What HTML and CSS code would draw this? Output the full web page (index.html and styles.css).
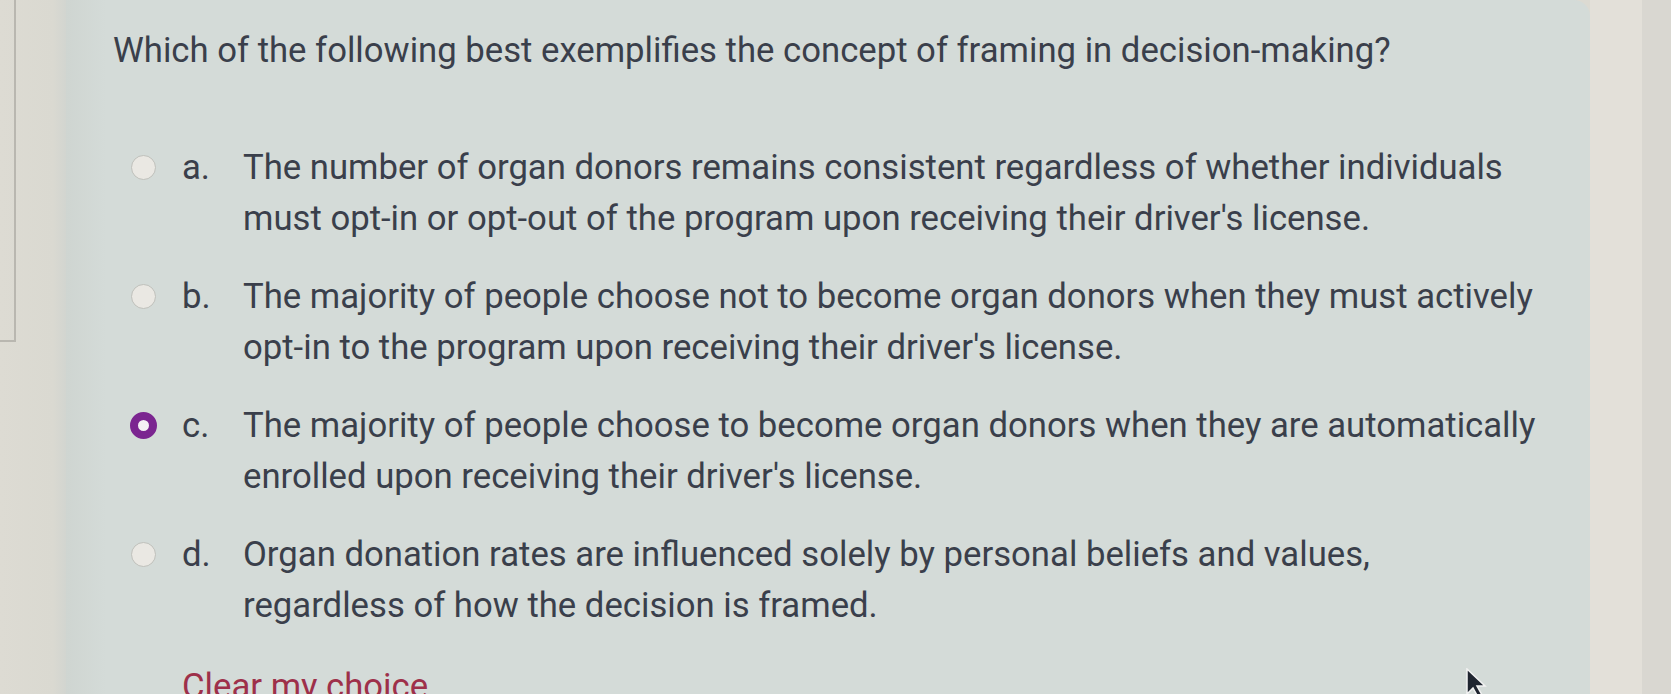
FILE: index.html
```html
<!DOCTYPE html>
<html lang="en">
<head>
<meta charset="utf-8">
<title>Question</title>
<link rel="stylesheet" href="styles.css">
</head>
<body>
<div class="page">
  <div class="left-strip"><div class="left-box"></div></div>
  <main class="panel">
    <h1 class="question">Which of the following best exemplifies the concept of framing in decision-making?</h1>
    <div class="answers">
      <div class="option">
        <span class="radio"></span>
        <span class="letter">a.</span>
        <span class="text">The number of organ donors remains consistent regardless of whether individuals must opt-in or opt-out of the program upon receiving their driver's license.</span>
      </div>
      <div class="option">
        <span class="radio"></span>
        <span class="letter">b.</span>
        <span class="text">The majority of people choose not to become organ donors when they must actively opt-in to the program upon receiving their driver's license.</span>
      </div>
      <div class="option">
        <span class="radio checked"></span>
        <span class="letter">c.</span>
        <span class="text">The majority of people choose to become organ donors when they are automatically enrolled upon receiving their driver's license.</span>
      </div>
      <div class="option">
        <span class="radio"></span>
        <span class="letter">d.</span>
        <span class="text">Organ donation rates are influenced solely by personal beliefs and values,<br>regardless of how the decision is framed.</span>
      </div>
    </div>
    <a class="clear" href="#">Clear my choice</a>
  </main>
  <div class="right-strip"></div>
  <div class="edge-strip"></div>
</div>
<svg class="cursor" width="22" height="30" viewBox="0 0 22 30">
  <path d="M1 1 L1 26 L7 20 L12 29 L16 27 L11 18 L19 18 Z" fill="#1f2530" stroke="#f2f2f2" stroke-width="1.5"/>
</svg>
</body>
</html>
```

FILE: styles.css
```css
html, body {
  margin: 0;
  padding: 0;
  height: 100%;
  overflow: hidden;
}
body {
  background: #dcdad2;
  font-family: Roboto, "Liberation Sans", Arial, sans-serif;
  color: #3a3f4b;
}
.page {
  display: flex;
  height: 694px;
  width: 1671px;
}
.left-strip {
  width: 66px;
  flex: none;
  background: linear-gradient(to right, #dddbd3 0%, #dad9d1 80%, #d2d5d0 100%);
}
.left-box {
  width: 14px;
  height: 340px;
  border-right: 2px solid #b9b7b0;
  border-bottom: 2px solid #b9b7b0;
}
.panel {
  flex: 1;
  background: linear-gradient(to right, #cfd5d1 0px, #d4dbd8 40px, #d4dbd8 100%);
  border-top-right-radius: 16px;
  padding: 30px 0 0 47px;
  box-sizing: border-box;
}
.question {
  margin: 0;
  font-size: 34.7px;
  line-height: 40px;
  font-weight: 400;
  color: #3a3f4b;
}
.answers {
  margin-top: 72px;
  margin-left: 18px;
}
.option {
  display: flex;
  align-items: flex-start;
  margin-bottom: 27px;
  font-size: 34.7px;
  line-height: 51px;
}
.radio {
  flex: none;
  width: 25px;
  height: 25px;
  margin-top: 13px;
  border-radius: 50%;
  box-sizing: border-box;
  background: #eae8e3;
  border: 1px solid #bfc0bb;
}
.radio.checked {
  width: 27px;
  height: 27px;
  margin-top: 12px;
  margin-left: -1px;
  background: #f4f0f4;
  border: 8px solid #7b2590;
}
.letter {
  flex: none;
  width: 61px;
  margin-left: 26px;
}
.radio.checked + .letter {
  margin-left: 25px;
}
.text {
  flex: none;
  width: 1300px;
}
.clear {
  display: inline-block;
  margin-left: 69px;
  margin-top: 3px;
  font-size: 34.7px;
  line-height: 51px;
  color: #9e304a;
  text-decoration: none;
}
.right-strip {
  width: 52px;
  flex: none;
  background: #e3e0d9;
}
.edge-strip {
  width: 29px;
  flex: none;
  background: #d9d7d1;
}
.cursor {
  position: absolute;
  left: 1466px;
  top: 668px;
}
```
